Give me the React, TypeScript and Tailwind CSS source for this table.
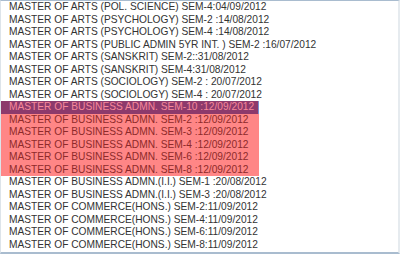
const rows: { text: string; tone?: "sel" | "hit" }[] = [
  { text: "MASTER OF ARTS (POL. SCIENCE) SEM-4:04/09/2012" },
  { text: "MASTER OF ARTS (PSYCHOLOGY) SEM-2 :14/08/2012" },
  { text: "MASTER OF ARTS (PSYCHOLOGY) SEM-4 :14/08/2012" },
  { text: "MASTER OF ARTS (PUBLIC ADMIN 5YR INT. ) SEM-2 :16/07/2012" },
  { text: "MASTER OF ARTS (SANSKRIT) SEM-2::31/08/2012" },
  { text: "MASTER OF ARTS (SANSKRIT) SEM-4:31/08/2012" },
  { text: "MASTER OF ARTS (SOCIOLOGY) SEM-2 : 20/07/2012" },
  { text: "MASTER OF ARTS (SOCIOLOGY) SEM-4 : 20/07/2012" },
  { text: "MASTER OF BUSINESS ADMN. SEM-10 :12/09/2012", tone: "sel" },
  { text: "MASTER OF BUSINESS ADMN. SEM-2 :12/09/2012", tone: "hit" },
  { text: "MASTER OF BUSINESS ADMN. SEM-3 :12/09/2012", tone: "hit" },
  { text: "MASTER OF BUSINESS ADMN. SEM-4 :12/09/2012", tone: "hit" },
  { text: "MASTER OF BUSINESS ADMN. SEM-6 :12/09/2012", tone: "hit" },
  { text: "MASTER OF BUSINESS ADMN. SEM-8 :12/09/2012", tone: "hit" },
  { text: "MASTER OF BUSINESS ADMN.(I.I.) SEM-1 :20/08/2012" },
  { text: "MASTER OF BUSINESS ADMN.(I.I.) SEM-3 :20/08/2012" },
  { text: "MASTER OF COMMERCE(HONS.) SEM-2:11/09/2012" },
  { text: "MASTER OF COMMERCE(HONS.) SEM-4:11/09/2012" },
  { text: "MASTER OF COMMERCE(HONS.) SEM-6:11/09/2012" },
  { text: "MASTER OF COMMERCE(HONS.) SEM-8:11/09/2012" },
];

export default function App() {
  return (
    <div className="h-[254px] w-[400px] overflow-hidden border-t border-b-2 border-l border-r-2 border-t-[#a9bccf] border-b-[#a9bccf] border-l-[#dde4ea] border-r-[#e6ebef] bg-white font-['Liberation_Sans',Arial,sans-serif] text-[10.2px] leading-[12.5px] text-[#333]">
      {rows.map((row, i) => (
        <div
          key={i}
          className={
            row.tone === "sel"
              ? "h-[12.5px] w-[258px] whitespace-nowrap border-r border-r-[#7a8fd0] bg-[#8d3a6c] pl-2 text-[#f6889a]"
              : row.tone === "hit"
                ? "h-[12.5px] w-[258px] whitespace-nowrap bg-[#ff8686] pl-2 text-[#8e2a2a]"
                : "h-[12.5px] whitespace-nowrap pl-2"
          }
        >
          {row.text}
        </div>
      ))}
    </div>
  );
}
